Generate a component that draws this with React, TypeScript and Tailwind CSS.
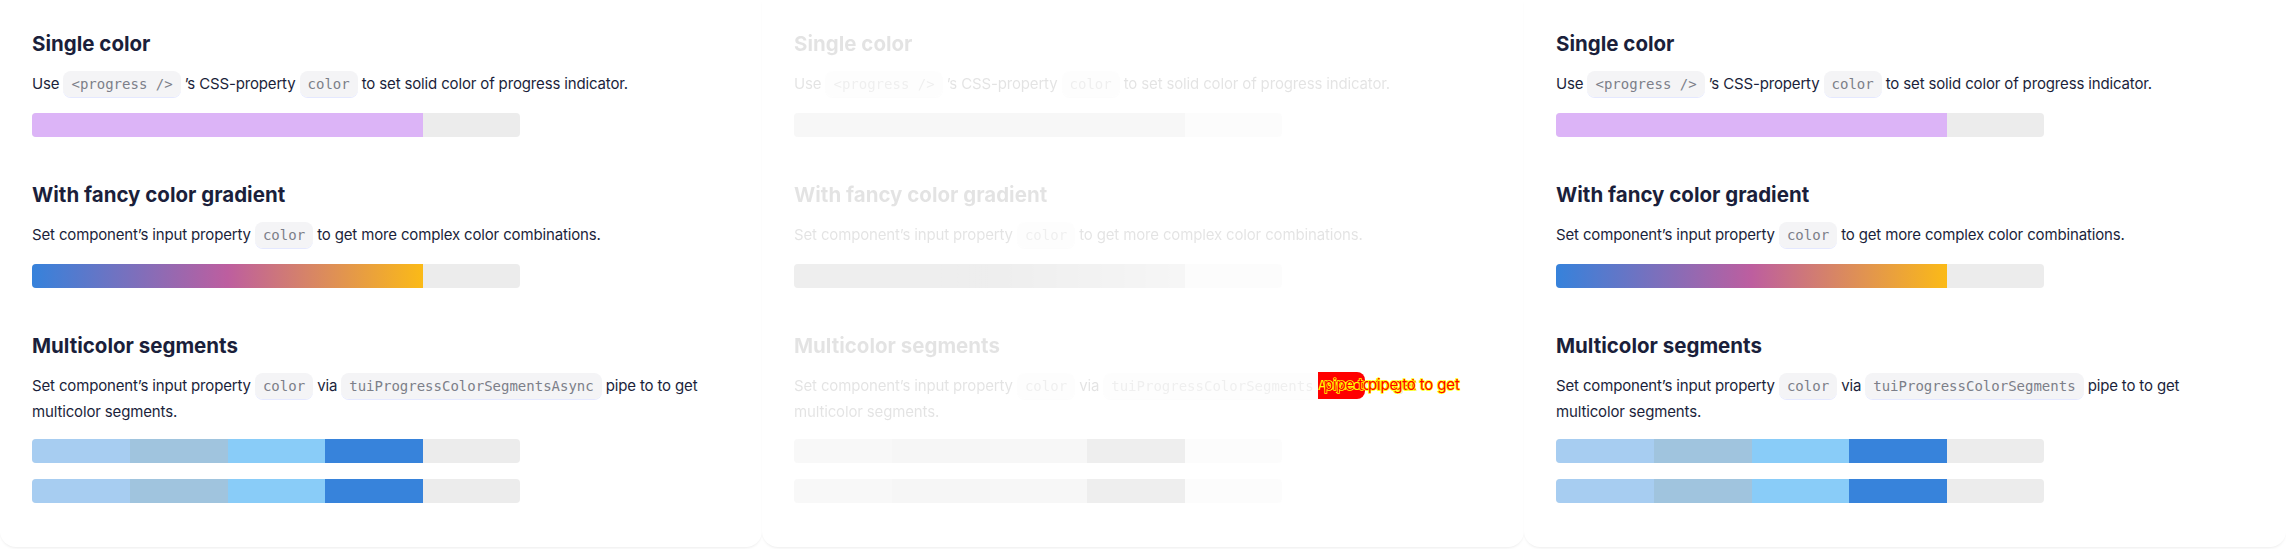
import type { ReactNode } from "react"

const Code = ({ children }: { children: ReactNode }) => (
  <code className="rounded-lg bg-[#f4f4f6] px-2 py-[5px] font-['DejaVu_Sans_Mono',monospace] text-[14px] tracking-normal text-[#7c7f89] shadow-[0_1px_0_#e4e8ff]">
    {children}
  </code>
)

const Bar = ({ children }: { children: ReactNode }) => (
  <div className="flex h-6 w-[488px] overflow-hidden rounded bg-[#ececec]">{children}</div>
)

const Segments = () => (
  <Bar>
    <div className="w-[98px] bg-[#a7cdf1]" />
    <div className="w-[98px] bg-[#a0c4de]" />
    <div className="w-[97px] bg-[#89ccf8]" />
    <div className="w-[98px] bg-[#3783db]" />
  </Bar>
)

function Content({ pipe }: { pipe: string }) {
  return (
    <div className="flex flex-col gap-[44px]">
      {/* single color */}
      <section>
        <h3 className="text-[20.5px] leading-7 font-bold">Single color</h3>
        <p className="mt-[13px] max-w-[686px] text-[15px] leading-[25px] tracking-[-0.15px]">
          Use <Code>&lt;progress /&gt;</Code> ’s CSS-property <Code>color</Code> to set solid color of progress indicator.
        </p>
        <div className="mt-4">
          <Bar>
            <div className="w-[391px] bg-[#dcb4f7]" />
          </Bar>
        </div>
      </section>

      {/* gradient */}
      <section>
        <h3 className="text-[20.5px] leading-7 font-bold">With fancy color gradient</h3>
        <p className="mt-[13px] max-w-[686px] text-[15px] leading-[25px] tracking-[-0.15px]">
          Set component’s input property <Code>color</Code> to get more complex color combinations.
        </p>
        <div className="mt-4">
          <Bar>
            <div className="w-[391px] bg-[linear-gradient(to_right,#3682db,#bd5e9f_50%,#fbba17)]" />
          </Bar>
        </div>
      </section>

      {/* segments */}
      <section>
        <h3 className="text-[20.5px] leading-7 font-bold">Multicolor segments</h3>
        <p className="mt-[13px] max-w-[686px] text-[15px] leading-[25px] tracking-[-0.15px]">
          Set component’s input property <Code>color</Code> via <Code>{pipe}</Code> pipe to to get multicolor segments.
        </p>
        <div className="mt-[15px] flex flex-col gap-4">
          <Segments />
          <Segments />
        </div>
      </section>
    </div>
  )
}

function Card({ children }: { children: ReactNode }) {
  return (
    <div className="relative h-[547px] w-[762px] rounded-b-2xl bg-white px-8 pt-[30px] shadow-[0_2px_3px_-1px_rgba(0,0,0,0.08)]">
      {children}
    </div>
  )
}

export default function App() {
  return (
    <div className="flex h-[549px] w-[2286px] overflow-hidden bg-white font-['Inter',sans-serif] text-[#1b1f3b]">
      <Card>
        <Content pipe="tuiProgressColorSegmentsAsync" />
      </Card>

      {/* diff */}
      <Card>
        <div className="opacity-[0.12] grayscale">
          <Content pipe="tuiProgressColorSegments" />
        </div>
        <div className="absolute top-[372px] left-[556px] flex h-[27px] w-[47px] items-center overflow-hidden rounded-r-lg bg-[#ff0000] font-['DejaVu_Sans_Mono',monospace] text-[14px] text-[#ffff00]">
          Async
        </div>
        <span className="absolute top-[372px] left-[562px] text-[15px] leading-[25px] tracking-[-0.15px] text-[#ff0000] [paint-order:stroke_fill] [-webkit-text-stroke:1.5px_#ffff00]">
          pipe to to get
        </span>
        <span className="absolute top-[372px] left-[606px] text-[15px] leading-[25px] tracking-[-0.15px] text-[#ff0000] [paint-order:stroke_fill] [-webkit-text-stroke:1.5px_#ffff00]">
          pipe to to get
        </span>
      </Card>

      <Card>
        <Content pipe="tuiProgressColorSegments" />
      </Card>
    </div>
  )
}
